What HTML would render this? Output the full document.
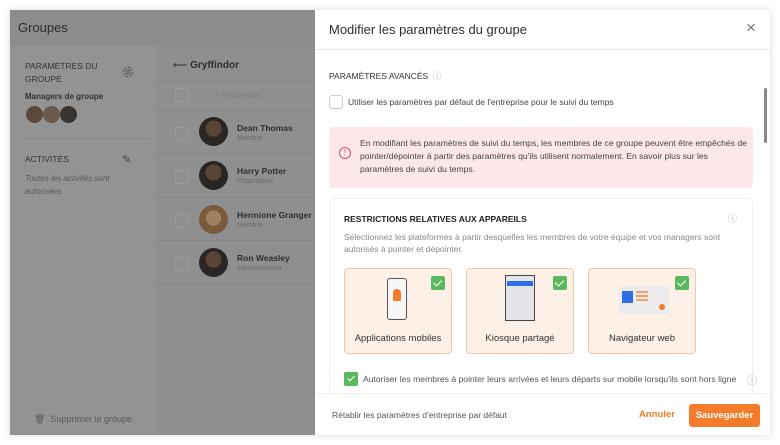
<!DOCTYPE html>
<html><head><meta charset="utf-8"><style>
*{box-sizing:border-box;margin:0;padding:0}
body{width:780px;height:445px;background:#fff;font-family:"Liberation Sans",sans-serif;position:relative;overflow:hidden;color:#333}
.frame{position:absolute;left:10px;top:10px;width:760px;height:425px;background:#919191;box-shadow:0 0 8px rgba(0,0,0,.15);overflow:hidden}
.hdr{position:absolute;left:0;top:0;width:305px;height:36px;background:#8c8c8c}
.t{position:absolute;white-space:nowrap}
.side{position:absolute;left:0;top:36px;width:145px;height:389px;background:#939393}
.mid{position:absolute;left:145px;top:36px;width:160px;height:389px;background:#8f8f8f}
.av{position:absolute;border-radius:50%;background:radial-gradient(circle at 50% 40%,#5a4436 0 35%,#2a2624 36%)}
.cb{position:absolute;width:14px;height:14px;border:1px solid #9c9c9c;border-radius:3px}
.line{position:absolute;height:1px;background:#868686}
.panel{position:absolute;left:305px;top:0;width:455px;height:425px;background:#fff}
.card{position:absolute;top:258px;width:108px;height:86px;background:#fdf0e6;border:1px solid #f4c9a6;border-radius:4px}
.card .lb{position:absolute;bottom:9px;width:100%;text-align:center;font-size:9.5px;color:#333}
.ck{position:absolute;right:6px;top:7px;width:14px;height:14px;background:#5cb85c;border-radius:2px}
.ck:after{content:"";position:absolute;left:4px;top:2px;width:4px;height:7px;border:solid #fff;border-width:0 1.3px 1.3px 0;transform:rotate(45deg)}
</style></head><body>
<div class="frame">
<div class="hdr"></div>
<div class="t" style="left:8px;top:10px;font-size:13px;color:#2e2e2e">Groupes</div>
<div class="side"></div>
<div class="mid"></div>
<div class="t" style="left:15px;top:50px;font-size:8.5px;line-height:13px;color:#333">PARAMÈTRES DU<br>GROUPE</div>
<svg style="position:absolute;left:112px;top:56px" width="12" height="12" viewBox="0 0 12 12"><circle cx="6" cy="6" r="2" fill="none" stroke="#444"/><circle cx="6" cy="6" r="4.5" fill="none" stroke="#444" stroke-dasharray="2 1.5"/></svg>
<div class="t" style="left:15px;top:82px;font-size:8px;font-weight:bold;color:#333">Managers de groupe</div>
<div class="av" style="left:16px;top:96px;width:17px;height:17px;background:#5b4a3c"></div>
<div class="av" style="left:33px;top:96px;width:17px;height:17px;background:#6b5a4b"></div>
<div class="av" style="left:50px;top:96px;width:17px;height:17px;background:#3a3430"></div>
<div class="line" style="left:15px;top:128px;width:125px"></div>
<div class="t" style="left:15px;top:144px;font-size:8.5px;color:#333">ACTIVITÉS</div>
<div class="t" style="left:112px;top:143px;font-size:11px;color:#444">✎</div>
<div class="t" style="left:15px;top:162px;font-size:8px;line-height:13px;font-style:italic;color:#5a5a5a">Toutes les activités sont<br>autorisées</div>
<div class="t" style="left:24px;top:404px;font-size:9px;color:#5a5a5a">🗑&nbsp; Supprimer le groupe</div>
<div class="t" style="left:163px;top:50px;font-size:10px;color:#2e2e2e">⟵ <b>Gryffindor</b></div>
<div class="line" style="left:145px;top:71px;width:160px"></div>
<div class="cb" style="left:165px;top:78px"></div>
<div class="t" style="left:205px;top:81px;font-size:8px;color:#7d7d7d">○ Recherche...</div>
<div class="line" style="left:145px;top:100px;width:160px"></div>
<div class="cb" style="left:165px;top:117px"></div><div class="av" style="left:189px;top:107px;width:29px;height:29px"></div>
<div class="t" style="left:227px;top:113px;font-size:8.5px;font-weight:bold;color:#2e2e2e">Dean Thomas</div><div class="t" style="left:227px;top:125px;font-size:7px;color:#6a6a6a">Membre</div>
<div class="line" style="left:145px;top:143px;width:160px"></div>
<div class="cb" style="left:165px;top:160px"></div><div class="av" style="left:189px;top:151px;width:29px;height:29px"></div>
<div class="t" style="left:227px;top:156px;font-size:8.5px;font-weight:bold;color:#2e2e2e">Harry Potter</div><div class="t" style="left:227px;top:168px;font-size:7px;color:#6a6a6a">Propriétaire</div>
<div class="line" style="left:145px;top:187px;width:160px"></div>
<div class="cb" style="left:165px;top:204px"></div><div class="av" style="left:189px;top:195px;width:29px;height:29px;background:radial-gradient(circle at 50% 45%,#a08060 0 35%,#7a5a3a 36%)"></div>
<div class="t" style="left:227px;top:200px;font-size:8.5px;font-weight:bold;color:#2e2e2e">Hermione Granger</div><div class="t" style="left:227px;top:212px;font-size:7px;color:#6a6a6a">Membre</div>
<div class="line" style="left:145px;top:230px;width:160px"></div>
<div class="cb" style="left:165px;top:247px"></div><div class="av" style="left:189px;top:238px;width:29px;height:29px"></div>
<div class="t" style="left:227px;top:243px;font-size:8.5px;font-weight:bold;color:#2e2e2e">Ron Weasley</div><div class="t" style="left:227px;top:255px;font-size:7px;color:#6a6a6a">Administrateur</div>
<div class="line" style="left:145px;top:274px;width:160px"></div>

<div class="panel">
<div class="t" style="left:14px;top:12px;font-size:13px;color:#2e2e2e">Modifier les paramètres du groupe</div>
<div class="t" style="left:431px;top:8px;font-size:17px;color:#777;font-weight:300">×</div>
<div style="position:absolute;left:0;top:39px;width:455px;height:1px;background:#e8e8e8"></div>
<div class="t" style="left:14px;top:60px;font-size:8.5px;color:#333">PARAMÈTRES AVANCÉS &nbsp;<span style="color:#aaa">ⓘ</span></div>
<div class="cb" style="left:14px;top:85px;border-color:#ccc;width:14px;height:14px"></div>
<div class="t" style="left:33px;top:87px;font-size:8.5px;color:#444">Utiliser les paramètres par défaut de l'entreprise pour le suivi du temps</div>
<div style="position:absolute;left:14px;top:117px;width:424px;height:61px;background:#fce8ea;border-radius:4px"></div>
<div style="position:absolute;left:24px;top:137px;width:12px;height:12px;border:1px solid #d9506a;border-radius:50%;color:#d9506a;font-size:8px;text-align:center;line-height:10px">!</div>
<div class="t" style="left:45px;top:127px;font-size:8.6px;line-height:13px;color:#444">En modifiant les paramètres de suivi du temps, les membres de ce groupe peuvent être empêchés de<br>pointer/dépointer à partir des paramètres qu'ils utilisent normalement. En savoir plus sur les<br>paramètres de suivi du temps.</div>
<div style="position:absolute;left:14px;top:188px;width:424px;height:200px;border:1px solid #eee;border-radius:4px"></div>
<div class="t" style="left:29px;top:204px;font-size:8.5px;font-weight:bold;color:#222">RESTRICTIONS RELATIVES AUX APPAREILS</div>
<div class="t" style="left:413px;top:202px;font-size:9px;color:#aaa">ⓘ</div>
<div class="t" style="left:29px;top:221px;font-size:8.5px;line-height:12px;color:#888">Sélectionnez les plateformes à partir desquelles les membres de votre équipe et vos managers sont<br>autorisés à pointer et dépointer.</div>
<div class="card" style="left:29px"><div class="ck"></div>
<div style="position:absolute;left:42px;top:9px;width:20px;height:42px;border:1.5px solid #555;border-radius:3px;background:#f6f6f6"></div>
<div style="position:absolute;left:48px;top:20px;width:8px;height:12px;background:#f47b2a;border-radius:4px 4px 1px 1px"></div>
<div class="lb">Applications mobiles</div></div>
<div class="card" style="left:151px"><div class="ck"></div>
<div style="position:absolute;left:38px;top:6px;width:30px;height:46px;border:1.5px solid #444;background:#e4e4e8"></div>
<div style="position:absolute;left:40px;top:12px;width:26px;height:5px;background:#2e6ee6"></div>
<div class="lb">Kiosque partagé</div></div>
<div class="card" style="left:273px"><div class="ck"></div>
<div style="position:absolute;left:30px;top:17px;width:50px;height:28px;background:#ececee"></div>
<div style="position:absolute;left:33px;top:22px;width:11px;height:12px;background:#2e6ee6"></div>
<div style="position:absolute;left:47px;top:22px;width:12px;height:2px;background:#f4a060;box-shadow:0 4px #f4a060,0 8px #f4a060"></div>
<div style="position:absolute;left:70px;top:35px;width:6px;height:6px;border-radius:50%;background:#f47b2a"></div>
<div class="lb">Navigateur web</div></div>
<div style="position:absolute;left:29px;top:362px;width:14px;height:14px;background:#5cb85c;border-radius:2px"></div>
<div class="t" style="left:34px;top:364px;width:4px;height:7px;border:solid #fff;border-width:0 1.3px 1.3px 0;transform:rotate(45deg)"></div>
<div class="t" style="left:48px;top:364px;font-size:8.6px;color:#555">Autoriser les membres à pointer leurs arrivées et leurs départs sur mobile lorsqu'ils sont hors ligne</div>
<div class="t" style="left:432px;top:362px;font-size:10px;color:#aaa">ⓘ</div>
<div style="position:absolute;left:0;top:383px;width:455px;height:42px;background:#fff;border-top:1px solid #eee"></div>
<div class="t" style="left:17px;top:400px;font-size:8.5px;color:#555">Rétablir les paramètres d'entreprise par défaut</div>
<div class="t" style="left:324px;top:399px;font-size:9.5px;font-weight:bold;color:#f47b2a">Annuler</div>
<div style="position:absolute;left:374px;top:394px;width:71px;height:23px;background:#f47b2a;border-radius:3px;color:#fff;font-size:9.5px;font-weight:bold;text-align:center;line-height:23px">Sauvegarder</div>
<div style="position:absolute;left:449px;top:78px;width:3px;height:55px;background:#888;border-radius:2px"></div>
</div>
</div>
</body></html>
